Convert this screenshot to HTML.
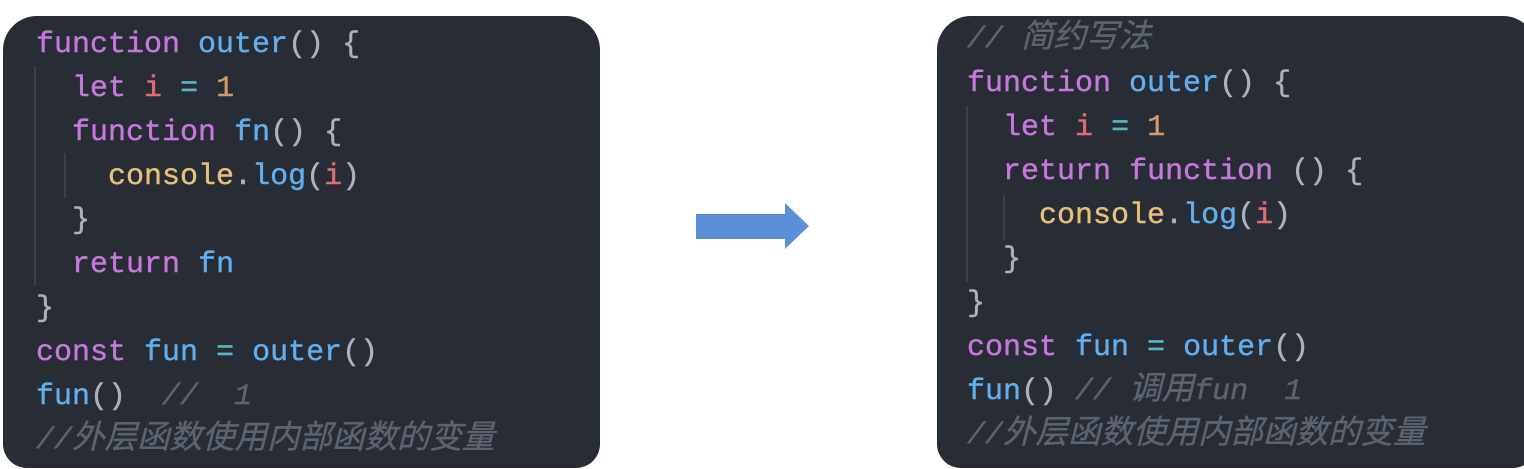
<!DOCTYPE html>
<html><head><meta charset="utf-8"><style>
html,body{margin:0;padding:0;background:#fff;width:1524px;height:469px;overflow:hidden;position:relative}
.p{position:absolute;background:#282c34;border-radius:34px}
pre{margin:0;position:absolute;font-family:"Liberation Mono","Noto Sans CJK SC",monospace;font-size:30px;line-height:44px;color:#abb2bf;-webkit-text-stroke:0.4px currentColor}
.k{color:#c678dd}.f{color:#61afef}.r{color:#e06c75}.n{color:#d19a66}.y{color:#e5c07b}.o{color:#56b6c2}
.c{color:#5c6370;font-style:italic}
.cj{font-size:32.5px;line-height:30px}
.g{position:absolute;width:2px;background:#3b3f47}
</style></head><body>
<div class="p" style="left:3px;top:16px;width:597px;height:452px;border-radius:34px 34px 24px 24px"></div>
<div class="g" style="left:34px;top:66px;height:220px"></div>
<div class="g" style="left:64px;top:153px;height:45px"></div>
<pre style="left:36px;top:23px"><span class="k">function</span> <span class="f">outer</span>() {
  <span class="k">let</span> <span class="r">i</span> <span class="o">=</span> <span class="n">1</span>
  <span class="k">function</span> <span class="f">fn</span>() {
    <span class="y">console</span>.<span class="f">log</span>(<span class="r">i</span>)
  }
  <span class="k">return</span> <span class="f">fn</span>
}
<span class="k">const</span> <span class="f">fun</span> <span class="o">=</span> <span class="f">outer</span>()
<span class="f">fun</span>()  <span class="c">//  1</span>
<span class="c">//<span class="cj">外层函数使用内部函数的变量</span></span></pre>

<svg style="position:absolute;left:696px;top:203px" width="114" height="47"><polygon points="0,11 89,11 89,0 113,23 89,46 89,36 0,36" fill="#5b8fd6"/></svg>

<div class="p" style="left:937px;top:16px;width:600px;height:452px;border-radius:34px 34px 24px 24px"></div>
<div class="g" style="left:966px;top:106px;height:176px"></div>
<div class="g" style="left:1003px;top:195px;height:45px"></div>
<pre style="left:967px;top:18px"><span class="c">// <span class="cj">简约写法</span></span>
<span class="k">function</span> <span class="f">outer</span>() {
  <span class="k">let</span> <span class="r">i</span> <span class="o">=</span> <span class="n">1</span>
  <span class="k">return</span> <span class="k">function</span> () {
    <span class="y">console</span>.<span class="f">log</span>(<span class="r">i</span>)
  }
}
<span class="k">const</span> <span class="f">fun</span> <span class="o">=</span> <span class="f">outer</span>()
<span class="f">fun</span>() <span class="c">// <span class="cj">调用</span>fun  1</span>
<span class="c">//<span class="cj">外层函数使用内部函数的变量</span></span></pre>
</body></html>
